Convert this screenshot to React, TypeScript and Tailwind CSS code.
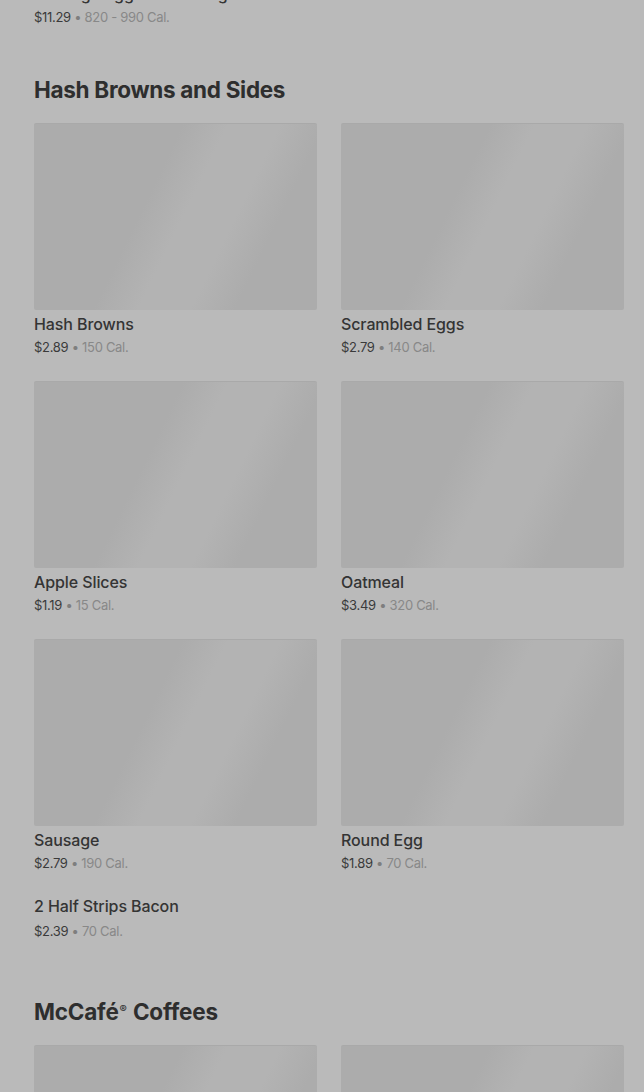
import React from "react";

type Item = { name: string; price: string; cal: string };

const hash: Item[] = [
  { name: "Hash Browns", price: "$2.89", cal: "150 Cal." },
  { name: "Scrambled Eggs", price: "$2.79", cal: "140 Cal." },
  { name: "Apple Slices", price: "$1.19", cal: "15 Cal." },
  { name: "Oatmeal", price: "$3.49", cal: "320 Cal." },
  { name: "Sausage", price: "$2.79", cal: "190 Cal." },
  { name: "Round Egg", price: "$1.89", cal: "70 Cal." },
];

function Price({ price, cal }: { price: string; cal: string }) {
  return (
    <div className="text-[13px] leading-[18px] tracking-[-0.3px]">
      <span className="text-[#3a3a3a]">{price}</span>
      <span className="text-[#7e7e7e]"> • </span>
      <span className="text-[#888888]">{cal}</span>
    </div>
  );
}

function Placeholder({ className = "" }: { className?: string }) {
  return (
    <div
      className={
        "rounded-[2px] border-t border-[#a9a9a9] bg-[linear-gradient(116deg,#acacac_0%,#acacac_40%,#b3b3b3_52%,#b3b3b3_66%,#acacac_78%,#acacac_100%)] " +
        className
      }
    />
  );
}

function Card({ item }: { item: Item }) {
  return (
    <div className="flex flex-col">
      <Placeholder className="h-[187px]" />
      <div className="mt-[3px] text-[16px] leading-[22px] font-medium text-[#343434] tracking-[-0.1px]">
        {item.name}
      </div>
      <div className="mt-[3px]">
        <Price price={item.price} cal={item.cal} />
      </div>
    </div>
  );
}

export default function App() {
  return (
    <div
      className="min-h-[1092px] w-full overflow-hidden bg-[#bababa] pl-[34px] pr-[20px]"
      style={{ fontFamily: "Inter, 'Noto Sans', sans-serif" }}
    >
      <div className="-mt-[17px]">
        <div className="text-[16px] leading-[22px] font-medium text-[#343434]">
          Sausage Egg Biscuit Large Meal
        </div>
        <div className="mt-[3px]">
          <Price price="$11.29" cal="820 - 990 Cal." />
        </div>
      </div>

      <h2 className="mt-[50px] text-[22.5px] leading-[28px] font-bold text-[#2e2e2e] tracking-[-0.3px]">
        Hash Browns and Sides
      </h2>
      <div className="mt-[19px] grid grid-cols-2 gap-x-[24px] gap-y-[25px]">
        {hash.map((it) => (
          <Card key={it.name} item={it} />
        ))}
      </div>
      <div className="mt-[23px]">
        <div className="text-[16px] leading-[22px] font-medium text-[#343434] tracking-[-0.1px]">
          2 Half Strips Bacon
        </div>
        <div className="mt-[5px]">
          <Price price="$2.39" cal="70 Cal." />
        </div>
      </div>

      <h2 className="mt-[58px] text-[22.5px] leading-[28px] font-bold text-[#2e2e2e] tracking-[-0.2px]">
        McCafé
        <span className="relative -top-[7px] mx-[1px] text-[11px] leading-none font-semibold">®</span>{" "}
        Coffees
      </h2>
      <div className="mt-[19px] grid grid-cols-2 gap-x-[24px]">
        <Placeholder className="h-[187px]" />
        <Placeholder className="h-[187px]" />
      </div>
    </div>
  );
}
